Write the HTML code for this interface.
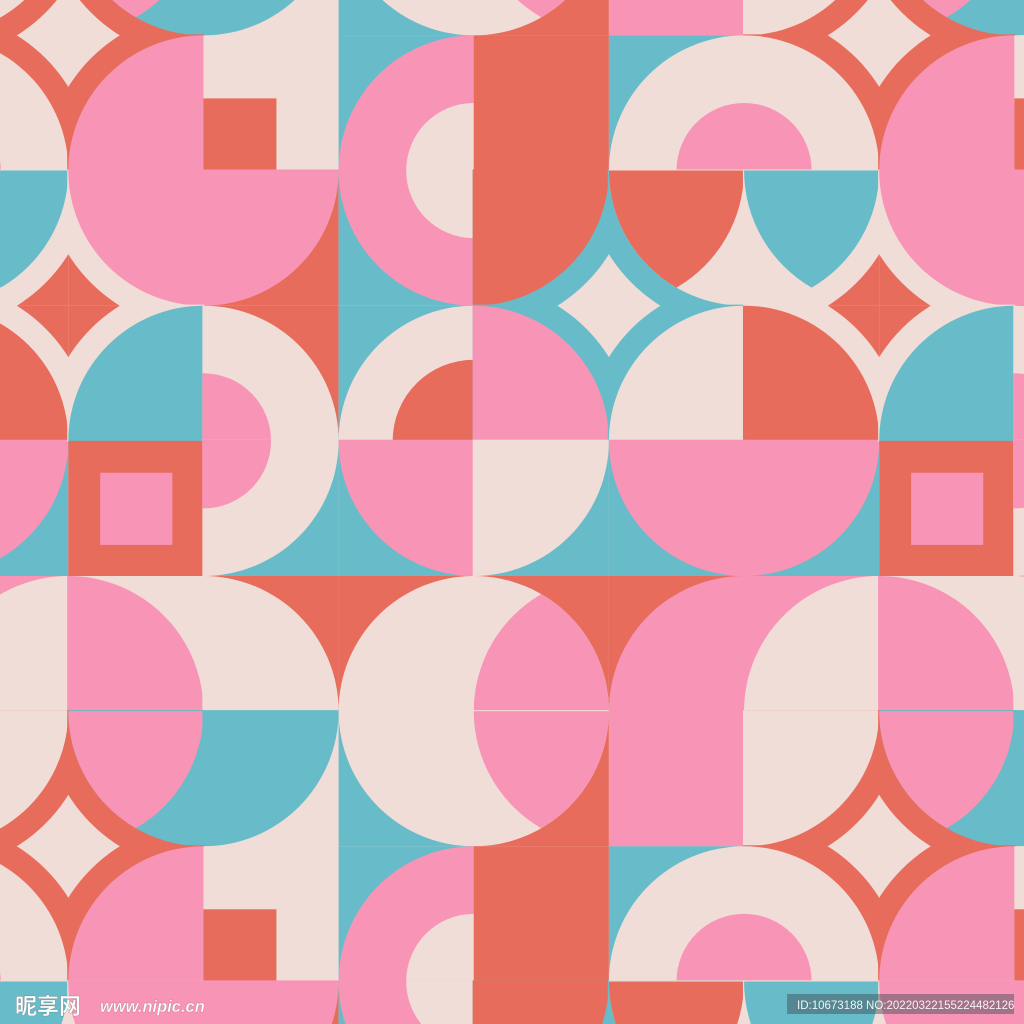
<!DOCTYPE html>
<html><head><meta charset="utf-8"><style>
html,body{margin:0;padding:0;width:1024px;height:1024px;overflow:hidden;background:#F1DDD7}
svg{display:block}
.k{fill:#E86C5C}.p{fill:#F894B6}.c{fill:#F1DDD7}.t{fill:#68BCC9}
.wm{font-family:"Liberation Sans","Noto Sans CJK SC",sans-serif;}
</style></head><body>
<svg width="1024" height="1024" viewBox="0 0 1024 1024" xmlns="http://www.w3.org/2000/svg">
<defs>
<clipPath id="q" clipPathUnits="userSpaceOnUse"><rect x="-0.008" y="-0.008" width="1.016" height="1.016"/></clipPath>
<path id="LT" d="M0,0 L1,0 A1,1 0 0,1 0.5,0.866 A1,1 0 0,1 0,0Z"/>
<path id="LB" d="M0,1 L1,1 A1,1 0 0,0 0.5,0.134 A1,1 0 0,0 0,1Z"/>
<g id="T">
<!-- row 0 -->
<g transform="translate(0 0)" clip-path="url(#q)"><rect class="c" width="1" height="1"/><circle class="k" cx="1" cy="1" r="1.176"/><circle class="p" cx="1" cy="1" r="1"/></g>
<g transform="translate(1 0)" clip-path="url(#q)"><rect class="c" width="1" height="1"/><rect class="k" x="0" y="0.466" width="0.54" height="0.534"/></g>
<g transform="translate(2 0)" clip-path="url(#q)"><rect class="t" width="1" height="1"/><circle class="p" cx="1" cy="1" r="1"/><circle class="c" cx="1" cy="1" r="0.5"/></g>
<g transform="translate(3 0)" clip-path="url(#q)"><rect class="k" width="1" height="1"/></g>
<g transform="translate(4 0)" clip-path="url(#q)"><rect class="t" width="1" height="1"/><circle class="c" cx="1" cy="1" r="1"/><circle class="p" cx="1" cy="1" r="0.5"/></g>
<g transform="translate(5 0)" clip-path="url(#q)"><rect class="c" width="1" height="1"/><circle class="k" cx="0" cy="1" r="1.176"/><circle class="c" cx="0" cy="1" r="1"/><circle class="p" cx="0" cy="1" r="0.5"/></g>
<!-- row 1 -->
<g transform="translate(0 1)" clip-path="url(#q)"><rect class="k" width="1" height="1"/><circle class="c" cx="1" cy="0" r="1.176"/><circle class="p" cx="1" cy="0" r="1"/></g>
<g transform="translate(1 1)" clip-path="url(#q)"><rect class="k" width="1" height="1"/><circle class="p" cx="0" cy="0" r="1"/></g>
<g transform="translate(2 1)" clip-path="url(#q)"><rect class="t" width="1" height="1"/><circle class="p" cx="1" cy="0" r="1"/><circle class="c" cx="1" cy="0" r="0.5"/></g>
<g transform="translate(3 1)" clip-path="url(#q)"><rect class="c" width="1" height="1"/><circle class="t" cx="0" cy="0" r="1.176"/><circle class="k" cx="0" cy="0" r="1"/></g>
<g transform="translate(4 1)" clip-path="url(#q)"><rect class="c" width="1" height="1"/><circle class="t" cx="1" cy="0" r="1.176"/><circle class="c" cx="1" cy="0" r="1"/><use href="#LT" class="k"/></g>
<g transform="translate(5 1)" clip-path="url(#q)"><rect class="k" width="1" height="1"/><circle class="c" cx="0" cy="0" r="1.176"/><use href="#LT" class="t"/></g>
<!-- row 2 -->
<g transform="translate(0 2)" clip-path="url(#q)"><rect class="k" width="1" height="1"/><circle class="c" cx="1" cy="1" r="1.176"/><circle class="t" cx="1" cy="1" r="1"/></g>
<g transform="translate(1 2)" clip-path="url(#q)"><rect class="k" width="1" height="1"/><circle class="c" cx="0" cy="1" r="1"/><circle class="p" cx="0" cy="1" r="0.5"/></g>
<g transform="translate(2 2)" clip-path="url(#q)"><rect class="t" width="1" height="1"/><circle class="c" cx="1" cy="1" r="1"/><circle class="k" cx="1" cy="1" r="0.6"/></g>
<g transform="translate(3 2)" clip-path="url(#q)"><rect class="c" width="1" height="1"/><circle class="t" cx="0" cy="1" r="1.176"/><circle class="p" cx="0" cy="1" r="1"/></g>
<g transform="translate(4 2)" clip-path="url(#q)"><rect class="c" width="1" height="1"/><circle class="t" cx="1" cy="1" r="1.176"/><circle class="c" cx="1" cy="1" r="1"/></g>
<g transform="translate(5 2)" clip-path="url(#q)"><rect class="k" width="1" height="1"/><circle class="c" cx="0" cy="1" r="1.176"/><circle class="k" cx="0" cy="1" r="1"/></g>
<!-- row 3 -->
<g transform="translate(0 3)" clip-path="url(#q)"><rect class="k" width="1" height="1"/><rect class="p" x="0.236" y="0.236" width="0.534" height="0.534"/></g>
<g transform="translate(1 3)" clip-path="url(#q)"><rect class="t" width="1" height="1"/><circle class="c" cx="0" cy="0" r="1"/><circle class="p" cx="0" cy="0" r="0.5"/></g>
<g transform="translate(2 3)" clip-path="url(#q)"><rect class="t" width="1" height="1"/><circle class="p" cx="1" cy="0" r="1"/></g>
<g transform="translate(3 3)" clip-path="url(#q)"><rect class="t" width="1" height="1"/><circle class="c" cx="0" cy="0" r="1"/></g>
<g transform="translate(4 3)" clip-path="url(#q)"><rect class="t" width="1" height="1"/><circle class="p" cx="1" cy="0" r="1"/></g>
<g transform="translate(5 3)" clip-path="url(#q)"><rect class="t" width="1" height="1"/><circle class="p" cx="0" cy="0" r="1"/></g>
<!-- row 4 -->
<g transform="translate(0 4)" clip-path="url(#q)"><rect class="c" width="1" height="1"/><circle class="p" cx="0" cy="1" r="1"/></g>
<g transform="translate(1 4)" clip-path="url(#q)"><rect class="k" width="1" height="1"/><circle class="c" cx="0" cy="1" r="1"/></g>
<g transform="translate(2 4)" clip-path="url(#q)"><rect class="k" width="1" height="1"/><circle class="c" cx="1" cy="1" r="1"/></g>
<g transform="translate(3 4)" clip-path="url(#q)"><rect class="k" width="1" height="1"/><circle class="c" cx="0" cy="1" r="1"/><use href="#LB" class="p"/></g>
<g transform="translate(4 4)" clip-path="url(#q)"><rect class="k" width="1" height="1"/><circle class="p" cx="1" cy="1" r="1"/></g>
<g transform="translate(5 4)" clip-path="url(#q)"><rect class="p" width="1" height="1"/><circle class="c" cx="1" cy="1" r="1"/></g>
<!-- row 5 -->
<g transform="translate(0 5)" clip-path="url(#q)"><rect class="c" width="1" height="1"/><circle class="k" cx="1" cy="0" r="1.176"/><circle class="t" cx="1" cy="0" r="1"/><use href="#LT" class="p"/></g>
<g transform="translate(1 5)" clip-path="url(#q)"><rect class="c" width="1" height="1"/><circle class="t" cx="0" cy="0" r="1"/></g>
<g transform="translate(2 5)" clip-path="url(#q)"><rect class="t" width="1" height="1"/><circle class="c" cx="1" cy="0" r="1"/></g>
<g transform="translate(3 5)" clip-path="url(#q)"><rect class="k" width="1" height="1"/><circle class="c" cx="0" cy="0" r="1"/><use href="#LT" class="p"/></g>
<g transform="translate(4 5)" clip-path="url(#q)"><rect class="p" width="1" height="1"/></g>
<g transform="translate(5 5)" clip-path="url(#q)"><rect class="c" width="1" height="1"/><circle class="k" cx="0" cy="0" r="1.176"/><circle class="c" cx="0" cy="0" r="1"/></g>
</g>
</defs>
<g transform="translate(68.3 35.4) scale(135.15)">
<use href="#T" x="-6" y="-6"/><use href="#T" x="0" y="-6"/><use href="#T" x="6" y="-6"/>
<use href="#T" x="-6" y="0"/><use href="#T" x="0" y="0"/><use href="#T" x="6" y="0"/>
<use href="#T" x="-6" y="6"/><use href="#T" x="0" y="6"/><use href="#T" x="6" y="6"/>
</g>
<text class="wm" x="15" y="1014" font-size="22" font-weight="bold" fill="#fff" stroke="rgba(0,0,0,0.25)" stroke-width="0.6">昵享网</text>
<text class="wm" x="100" y="1012" font-size="16.5" font-weight="bold" font-style="italic" fill="#fff" stroke="rgba(0,0,0,0.25)" stroke-width="0.5">www.nipic.cn</text>
<rect x="787" y="994" width="227" height="20" fill="rgba(60,70,80,0.45)"/>
<text class="wm" x="797" y="1009" font-size="11.5" fill="#f4f4f4">ID:10673188 NO:20220322155224482126</text>
</svg>
</body></html>
